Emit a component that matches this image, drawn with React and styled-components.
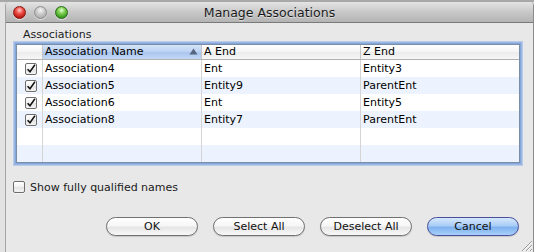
import React from "react";
import styled, { createGlobalStyle, css } from "styled-components";

const Global = createGlobalStyle`
  html, body { margin: 0; padding: 0; }
  body { width: 534px; height: 252px; overflow: hidden; background: #dedede; }
  * { box-sizing: border-box; }
`;

const Screen = styled.div`
  width: 534px;
  height: 252px;
  padding: 2px 0 0 5px;
  background: linear-gradient(#a8a8a8 0, #a8a8a8 2px, #e2e2e2 2px);
  font-family: "DejaVu Sans", "Liberation Sans", sans-serif;
  color: #000;
  display: flex;
`;

const Window = styled.div`
  position: relative;
  flex: 1;
  display: flex;
  flex-direction: column;
  background: #e8e8e8;
  border-left: 1px solid #a4a4a4;
  border-right: 1px solid #8c8c8c;
  border-top-left-radius: 4px;
  border-top-right-radius: 4px;
  overflow: hidden;
`;

const TitleBar = styled.div`
  height: 21px;
  display: grid;
  grid-template-columns: 1fr auto 1fr;
  align-items: center;
  background: linear-gradient(#e4e4e4, #c6c6c6 55%, #b4b4b4);
  border-bottom: 1px solid #7a7a7a;
`;

const Lights = styled.div`
  display: flex;
  gap: 8px;
  padding-left: 7px;
  padding-top: 1px;
`;

const lightColors = {
  red: css`
    background: radial-gradient(circle at 50% 30%, #ffd0cc 0, #f0554d 35%, #b4120c 80%, #8c0a06 100%);
    border-color: #8a1a14;
  `,
  gray: css`
    background: radial-gradient(circle at 50% 30%, #f6f6f6 0, #c8c8c8 45%, #9e9e9e 100%);
    border-color: #8e8e8e;
  `,
  green: css`
    background: radial-gradient(circle at 50% 30%, #e4ffd6 0, #7fd052 35%, #32931a 80%, #1f6e0e 100%);
    border-color: #2b6b1a;
  `,
};

const Light = styled.span`
  width: 13px;
  height: 13px;
  border-radius: 50%;
  border: 1px solid;
  ${(p) => lightColors[p.$color]}
  box-shadow: 0 1px 1px rgba(255,255,255,0.6);
`;

const Title = styled.div`
  font-size: 12.5px;
  line-height: 15px;
  color: #1a1a1a;
  text-shadow: 0 1px 0 rgba(255,255,255,0.5);
  padding-top: 1px;
`;

const Body = styled.div`
  flex: 1;
  display: flex;
  flex-direction: column;
  padding: 5px 13px 0 7px;
`;

const GroupLabel = styled.div`
  font-size: 11px;
  line-height: 13px;
  margin-left: 10px;
  margin-bottom: 3px;
  color: #1c1c1c;
`;

const Table = styled.div`
  margin-left: 3px;
  border: 1px solid #7b8ea9;
  background: #fff;
  box-shadow: 0 0 0 1px #86a6d8, 0 0 0 2px #9bb8e4, 0 0 0 3px rgba(170,195,235,0.8);
  display: grid;
  grid-template-columns: 26px 159px 159px 1fr;
`;

const HeaderCell = styled.div`
  height: 15px;
  font-size: 11px;
  line-height: 14px;
  padding-left: 2px;
  border-bottom: 1px solid #b2b2b2;
  border-right: ${(p) => (p.$last ? "none" : "1px solid #c6c6c6")};
  background: ${(p) =>
    p.$active
      ? "linear-gradient(#d4e3f8, #bcd2f2 50%, #a9c5ee 51%, #c2d8f6)"
      : "linear-gradient(#ffffff, #f4f4f4 50%, #ececec 51%, #f6f6f6)"};
  display: flex;
  align-items: center;
  justify-content: space-between;
  white-space: nowrap;
`;

const SortArrow = styled.svg`
  width: 9px;
  height: 7px;
  margin-right: 3px;
  margin-top: -1px;
`;

const Cell = styled.div`
  height: 17px;
  font-size: 11px;
  line-height: 17px;
  padding-left: 2px;
  background: ${(p) => (p.$alt ? "#edf3fe" : "#ffffff")};
  border-right: ${(p) => (p.$last ? "none" : "1px solid #d4d4d4")};
  white-space: nowrap;
  display: flex;
  align-items: center;
  justify-content: ${(p) => (p.$center ? "center" : "flex-start")};
`;

const Box = styled.span`
  width: 12px;
  height: 12px;
  border: 1px solid #6e6e6e;
  border-radius: 2px;
  background: linear-gradient(#ffffff, #f0f0f0 50%, #e2e2e2 51%, #f4f4f4);
  box-shadow: 0 1px 0 rgba(255,255,255,0.5);
  display: inline-flex;
  align-items: center;
  justify-content: center;
  flex: none;
`;

const Check = () => (
  <svg width="10" height="10" viewBox="0 0 10 10">
    <path d="M1.6 5.2 L4 7.8 L8.9 0.8" fill="none" stroke="#111" strokeWidth="1.5" />
  </svg>
);

const Option = styled.label`
  display: flex;
  align-items: center;
  gap: 5px;
  margin-top: 17px;
  height: 14px;
  font-size: 11px;
  color: #1a1a1a;
`;

const Buttons = styled.div`
  display: flex;
  justify-content: flex-end;
  gap: 15px;
  margin-top: 23px;
  padding-right: 1px;
`;

const Button = styled.button`
  width: 92px;
  height: 19px;
  border-radius: 10px;
  font-family: "DejaVu Sans", "Liberation Sans", sans-serif;
  font-size: 11px;
  line-height: 16px;
  padding: 0;
  color: #111;
  border: 1px solid ${(p) => (p.$primary ? "#4a4f9c" : "#707070")};
  background: ${(p) =>
    p.$primary
      ? "linear-gradient(#d6e8fc, #a9cdf6 45%, #7fb2ef 55%, #a8d0fa)"
      : "linear-gradient(#ffffff, #f6f6f6 45%, #e6e6e6 55%, #f8f8f8)"};
  box-shadow: 0 1px 1px rgba(0,0,0,0.15);
`;

const Grip = styled.svg`
  position: absolute;
  right: 0;
  bottom: 0;
  width: 13px;
  height: 13px;
`;

const rows = [
  ["Association4", "Ent", "Entity3"],
  ["Association5", "Entity9", "ParentEnt"],
  ["Association6", "Ent", "Entity5"],
  ["Association8", "Entity7", "ParentEnt"],
  null,
  null,
];

export default function App() {
  return (
    <>
      <Global />
      <Screen>
        <Window>
          <TitleBar>
            <Lights>
              <Light $color="red" />
              <Light $color="gray" />
              <Light $color="green" />
            </Lights>
            <Title>Manage Associations</Title>
            <div />
          </TitleBar>
          <Body>
            <GroupLabel>Associations</GroupLabel>
            <Table>
              <HeaderCell />
              <HeaderCell $active>
                Association Name
                <SortArrow viewBox="0 0 9 7">
                  <path d="M4.5 0.5 L8.5 6.5 L0.5 6.5 Z" fill="#55657e" />
                </SortArrow>
              </HeaderCell>
              <HeaderCell>A End</HeaderCell>
              <HeaderCell $last>Z End</HeaderCell>
              {rows.map((r, i) => {
                const alt = i % 2 === 1;
                return (
                  <React.Fragment key={i}>
                    <Cell $alt={alt} $center>
                      {r && (
                        <Box>
                          <Check />
                        </Box>
                      )}
                    </Cell>
                    <Cell $alt={alt}>{r ? r[0] : ""}</Cell>
                    <Cell $alt={alt}>{r ? r[1] : ""}</Cell>
                    <Cell $alt={alt} $last>{r ? r[2] : ""}</Cell>
                  </React.Fragment>
                );
              })}
            </Table>
            <Option>
              <Box />
              Show fully qualified names
            </Option>
            <Buttons>
              <Button>OK</Button>
              <Button>Select All</Button>
              <Button>Deselect All</Button>
              <Button $primary>Cancel</Button>
            </Buttons>
          </Body>
          <Grip viewBox="0 0 13 13">
            <path d="M12 2 L2 12 M12 6 L6 12 M12 10 L10 12" stroke="#9a9a9a" strokeWidth="1" />
            <path d="M12 3 L3 12 M12 7 L7 12 M12 11 L11 12" stroke="#ffffff" strokeWidth="1" opacity="0.8" />
          </Grip>
        </Window>
      </Screen>
    </>
  );
}
